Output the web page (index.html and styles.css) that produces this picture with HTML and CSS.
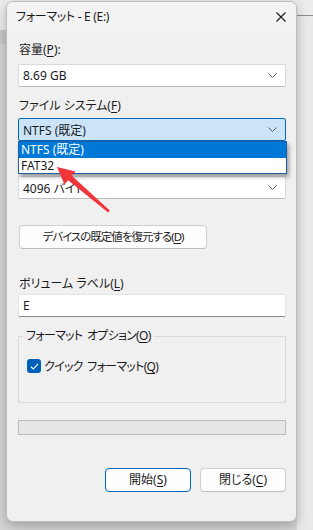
FILE: index.html
```html
<!DOCTYPE html>
<html lang="ja">
<head>
  <meta charset="UTF-8" />
  <meta name="viewport" content="width=device-width, initial-scale=1" />
  <title>フォーマット - E (E:)</title>
  <link rel="stylesheet" href="styles.css">
</head>
<body>

  <div class="back-window"></div>

  <div class="dialog">
    <div class="titlebar">
      <span class="title">フォーマット - E (E:)</span>
      <svg class="close" width="10" height="10" viewBox="0 0 10 10">
        <path d="M0.5 0.5 L9.5 9.5 M9.5 0.5 L0.5 9.5" stroke="#1a1a1a" stroke-width="1.1" fill="none"/>
      </svg>
    </div>

    <div class="content">
      <label class="field-label lbl-capacity">容量(<u>P</u>):</label>
      <div class="combo">
        <span>8.69 GB</span>
        <svg class="chev" width="9" height="5" viewBox="0 0 9 5"><path d="M0.5 0.5 L4.5 4.5 L8.5 0.5" stroke="#5c5c5c" fill="none"/></svg>
      </div>

      <label class="field-label lbl-fs">ファイル システム(<u>F</u>)</label>
      <div class="combo-wrap">
        <div class="combo combo-focus">
          <span>NTFS (既定)</span>
          <svg class="chev" width="9" height="5" viewBox="0 0 9 5"><path d="M0.5 0.5 L4.5 4.5 L8.5 0.5" stroke="#5c5c5c" fill="none"/></svg>
        </div>
        <ul class="droplist">
          <li class="selected">NTFS (既定)</li>
          <li>FAT32</li>
        </ul>
      </div>

      <!-- covered by the open drop-down list -->
      <label class="field-label lbl-unit">アロケーション ユニット サイズ(<u>A</u>)</label>
      <div class="combo">
        <span>4096 バイト</span>
        <svg class="chev" width="9" height="5" viewBox="0 0 9 5"><path d="M0.5 0.5 L4.5 4.5 L8.5 0.5" stroke="#5c5c5c" fill="none"/></svg>
      </div>

      <button class="btn btn-restore">デバイスの既定値を復元する(<u>D</u>)</button>

      <label class="field-label lbl-volume">ボリューム ラベル(<u>L</u>)</label>
      <div class="textbox">E</div>

      <fieldset class="group">
        <legend>フォーマット オプション(<u>O</u>)</legend>
        <div class="check-row">
          <span class="checkbox">
            <svg width="9" height="7" viewBox="0 0 9 7"><path d="M0.8 3.6 L3.3 6 L8.2 0.9" stroke="#fff" stroke-width="1.1" fill="none"/></svg>
          </span>
          <span class="check-text">クイック フォーマット(<u>Q</u>)</span>
        </div>
      </fieldset>

      <div class="progress"></div>

      <div class="actions">
        <button class="btn btn-default">開始(<u>S</u>)</button>
        <button class="btn">閉じる(<u>C</u>)</button>
      </div>
    </div>
  </div>

  <svg class="arrow" width="70" height="60" viewBox="50 160 70 60">
    <polygon points="57,167 75.5,171.5 71.9,175.7 109.8,210.6 108.2,212.4 68.1,180.3 64.5,184.5" fill="#f0363a"/>
  </svg>

</body>
</html>
```

FILE: styles.css
```css
* {
  box-sizing: border-box;
  margin: 0;
  padding: 0;
}

body {
  width: 313px;
  height: 530px;
  overflow: hidden;
  position: relative;
  padding: 1px 0 0 6px;
  font-family: "Noto Sans", "Noto Sans CJK JP", sans-serif;
  font-size: 12px;
  font-feature-settings: "palt";
  color: #1b1b1b;
  background: linear-gradient(to bottom, #ececec 0 30px, #c9c9c9 30px 44px, #d6d6d6 44px);
}

u {
  text-decoration: underline;
  text-underline-offset: 2px;
  text-decoration-thickness: 1px;
}

/* window behind the dialog, on the right */
.back-window {
  position: absolute;
  left: 297px;
  top: 15px;
  width: 16px;
  height: 515px;
  background: #e9e9e9;
  border-top: 1px solid #8c8c8c;
}

.dialog {
  position: relative;
  width: 291px;
  height: 521px;
  background: #f0f0f0;
  border: 1px solid #bdbdbd;
  border-radius: 7px;
  box-shadow: 0 4px 12px rgba(0, 0, 0, 0.26);
  overflow: hidden;
}

.titlebar {
  height: 30px;
  background: #f3f3f4;
  display: flex;
  align-items: center;
  justify-content: space-between;
  padding: 0 9px 0 9px;
}

.title {
  font-size: 12px;
  color: #1a1a1a;
  line-height: 16px;
  letter-spacing: -0.3px;
}

.close {
  display: block;
  margin-right: 1px;
}

.content {
  padding: 10px 10px 0 11px;
  display: flex;
  flex-direction: column;
}

.field-label {
  display: block;
  line-height: 16px;
  padding-left: 1px;
}

.lbl-capacity { margin-bottom: 6px; }
.lbl-fs { margin-top: 11px; margin-bottom: 4px; }
.lbl-unit { margin-top: 12px; margin-bottom: 7px; }
.lbl-volume { margin-top: 27px; margin-bottom: 2px; }

.combo {
  height: 23px;
  background: #fff;
  border: 1px solid #dadada;
  border-bottom-color: #bdbdbd;
  border-radius: 2px;
  display: flex;
  align-items: center;
  justify-content: space-between;
  padding: 0 8px 0 4px;
}

.chev { display: block; }

.combo-wrap {
  position: relative;
}

.combo-focus {
  background: #cce4f7;
  border-color: #0067c0;
}

.droplist {
  position: absolute;
  left: 0;
  top: 23px;
  width: 269px;
  list-style: none;
  background: #fff;
  border: 1px solid #1d5fa8;
  box-shadow: 2px 3px 4px rgba(0, 0, 0, 0.35);
  z-index: 2;
}

.droplist li {
  line-height: 15px;
  padding-left: 2px;
}

.droplist .selected {
  background: #0078d7;
  color: #fff;
  line-height: 16px;
}

.btn {
  font: inherit;
  font-feature-settings: "palt";
  color: #1b1b1b;
  background: #fdfdfd;
  border: 1px solid #d0d0d0;
  border-bottom-color: #bcbcbc;
  border-radius: 4px;
  height: 24px;
  line-height: 20px;
}

.btn-restore {
  margin-top: 26px;
  margin-left: 1px;
  width: 188px;
  font-size: 11.5px;
  letter-spacing: -1px;
}

.textbox {
  height: 23px;
  background: #fff;
  border: 1px solid #e4e4e4;
  border-bottom-color: #8a8a8a;
  border-radius: 2px;
  line-height: 21px;
  padding-left: 4px;
}

.group {
  margin-top: 12px;
  border: 1px solid #d9d9d9;
  height: 74px;
  padding: 14px 8px 0 8px;
}

.group legend {
  margin-left: -4px;
  padding: 0 3px;
  line-height: 14px;
  letter-spacing: -0.7px;
  word-spacing: 2px;
}

.check-row {
  display: flex;
  align-items: center;
  gap: 3px;
}

.check-text {
  letter-spacing: -0.7px;
  word-spacing: 2px;
}

.checkbox {
  width: 14px;
  height: 14px;
  background: #005fb8;
  border-radius: 3px;
  display: flex;
  align-items: center;
  justify-content: center;
}

.progress {
  margin-top: 17px;
  height: 15px;
  background: #e6e6e6;
  border: 1px solid #bcbcbc;
}

.actions {
  margin-top: 33px;
  display: flex;
  justify-content: flex-end;
  gap: 9px;
}

.actions .btn {
  width: 86px;
}

.btn-default {
  border: 1px solid #0067c0;
}

.arrow {
  position: absolute;
  left: 50px;
  top: 160px;
  z-index: 5;
}
```
